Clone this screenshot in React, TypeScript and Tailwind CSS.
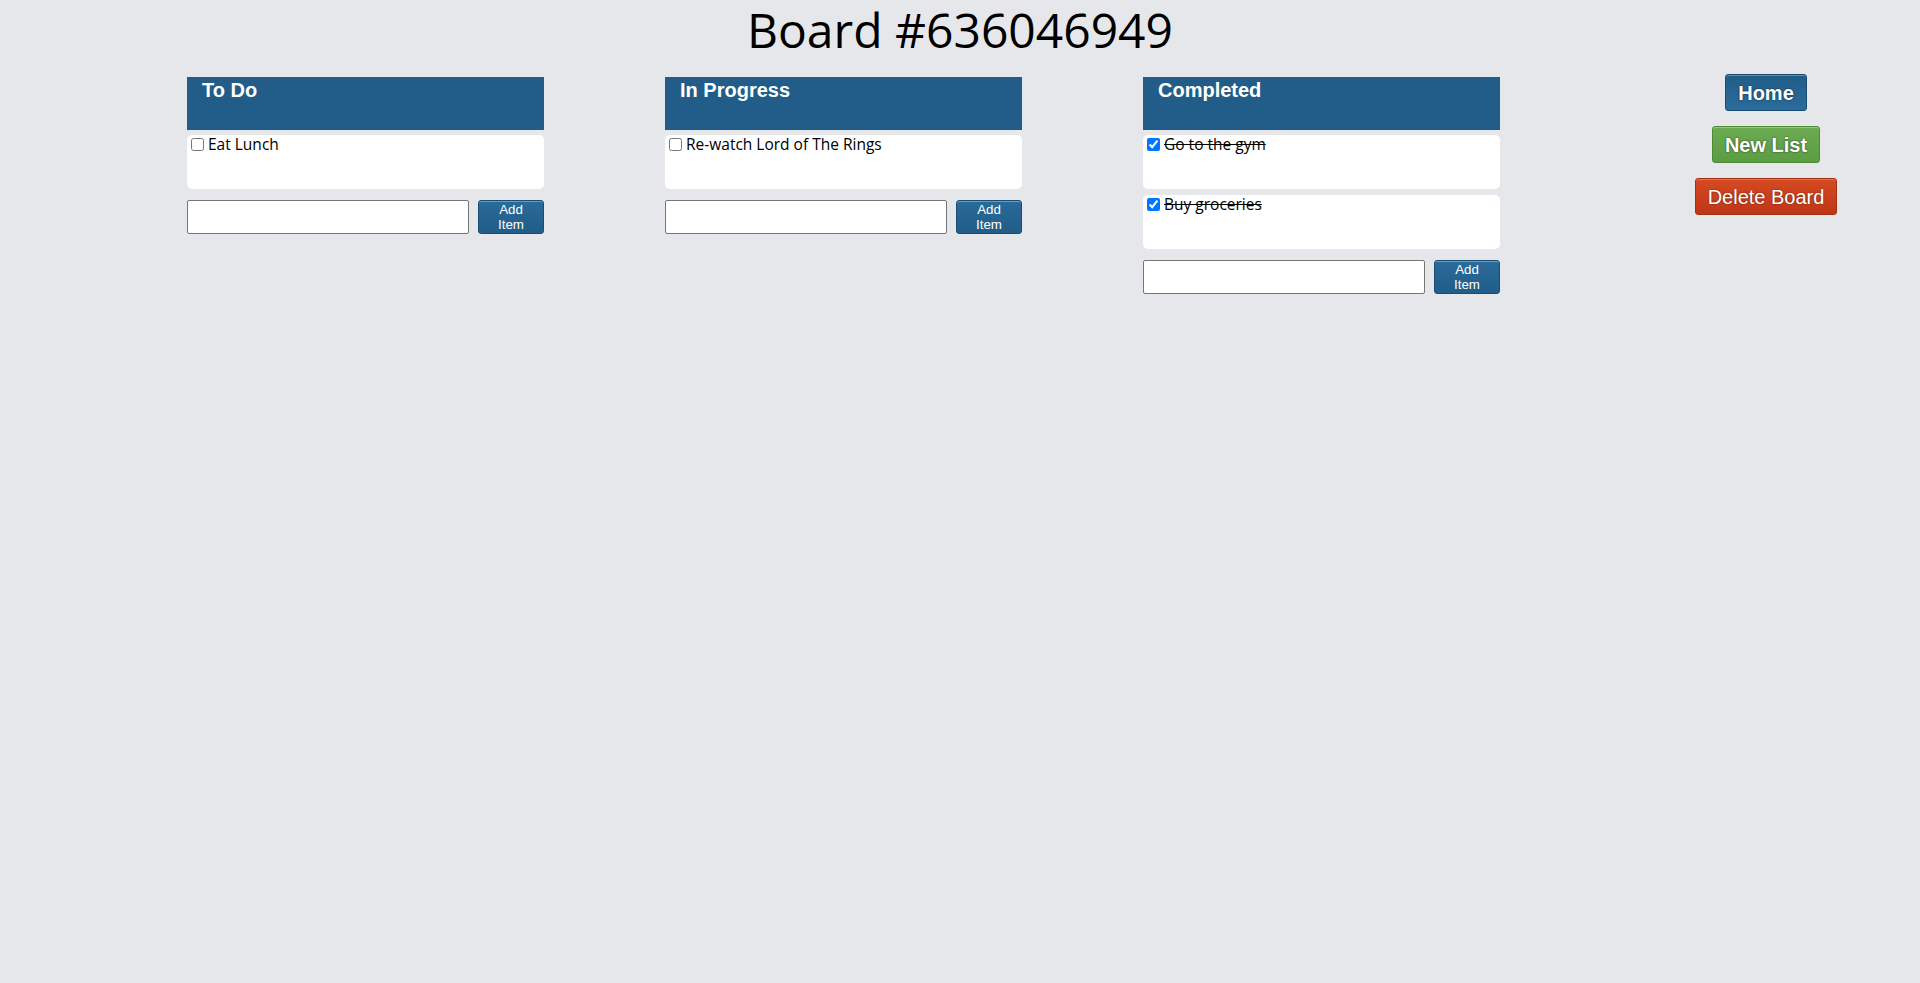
import React from "react";

type Item = { text: string; done: boolean };
type List = { title: string; items: Item[] };

const lists: List[] = [
  { title: "To Do", items: [{ text: "Eat Lunch", done: false }] },
  { title: "In Progress", items: [{ text: "Re-watch Lord of The Rings", done: false }] },
  {
    title: "Completed",
    items: [
      { text: "Go to the gym", done: true },
      { text: "Buy groceries", done: true },
    ],
  },
];

function Column({ list }: { list: List }) {
  return (
    <div className="w-[357px] flex flex-col">
      <div className="h-[53px] bg-[#215d88] pl-[15px] pt-[2px]">
        <h3 className="text-[20px] leading-[22px] font-bold text-white font-['Liberation_Sans',Arial,sans-serif]">
          {list.title}
        </h3>
      </div>
      <div className="flex flex-col gap-[6px] mt-[5px]">
        {list.items.map((it, i) => (
          <div key={i} className="h-[54px] bg-white rounded-[5px] flex items-start">
            <input
              type="checkbox"
              defaultChecked={it.done}
              className="w-[13px] h-[13px] ml-[4px] mt-[3px] mr-[4px] shrink-0"
            />
            <span
              className={
                "text-[15.5px] leading-[18px] text-black font-['Open_Sans',sans-serif] " +
                (it.done ? "line-through" : "")
              }
            >
              {it.text}
            </span>
          </div>
        ))}
      </div>
      <div className="flex gap-[9px] mt-[11px]">
        <input
          type="text"
          className="w-[282px] h-[34px] bg-white border border-[#767676] rounded-[2px] outline-none"
        />
        <button className="w-[66px] h-[34px] rounded-[3px] border border-[#1b4d73] bg-gradient-to-b from-[#2a6b9a] to-[#215d88] shadow-[inset_0_1px_0_rgba(140,190,230,0.6)] text-white text-[13.333px] leading-[15px] font-['Liberation_Sans',Arial,sans-serif]">
          Add
          <br />
          Item
        </button>
      </div>
    </div>
  );
}

export default function App() {
  return (
    <div className="min-h-[983px] w-full bg-[#e6e7eb] font-['Open_Sans',sans-serif]">
      <h1 className="text-center text-[48px] leading-[58px] text-black font-['Open_Sans',sans-serif] pt-[1px]">
        Board #636046949
      </h1>
      <div className="flex pl-[187px] mt-[18px]">
        <div className="flex gap-[121px]">
          {lists.map((l, i) => (
            <Column key={i} list={l} />
          ))}
        </div>
        <div className="w-[290px] ml-[121px] flex flex-col items-center gap-[15px] -mt-[3px]">
          <button className="h-[37px] px-[12px] rounded-[3px] border border-[#1b4d73] bg-gradient-to-b from-[#215d88] to-[#2b6c9c] shadow-[inset_0_1px_0_rgba(140,190,230,0.5)] text-white text-[20px] font-bold font-['Liberation_Sans',Arial,sans-serif] [text-shadow:0_0_2px_rgba(0,0,0,0.7)]">
            Home
          </button>
          <button className="h-[37px] px-[12px] rounded-[3px] border border-[#4d8a36] bg-gradient-to-b from-[#6cab51] to-[#5c9c42] shadow-[inset_0_1px_0_rgba(190,230,170,0.5)] text-white text-[20px] font-bold font-['Liberation_Sans',Arial,sans-serif] [text-shadow:0_0_2px_rgba(0,0,0,0.7)]">
            New List
          </button>
          <button className="h-[37px] px-[12px] rounded-[3px] border border-[#a3300f] bg-gradient-to-b from-[#d64a22] to-[#bf3618] shadow-[inset_0_1px_0_rgba(240,160,130,0.5)] text-white text-[20px] font-['Liberation_Sans',Arial,sans-serif] [text-shadow:0_0_2px_rgba(0,0,0,0.5)]">
            Delete Board
          </button>
        </div>
      </div>
    </div>
  );
}
